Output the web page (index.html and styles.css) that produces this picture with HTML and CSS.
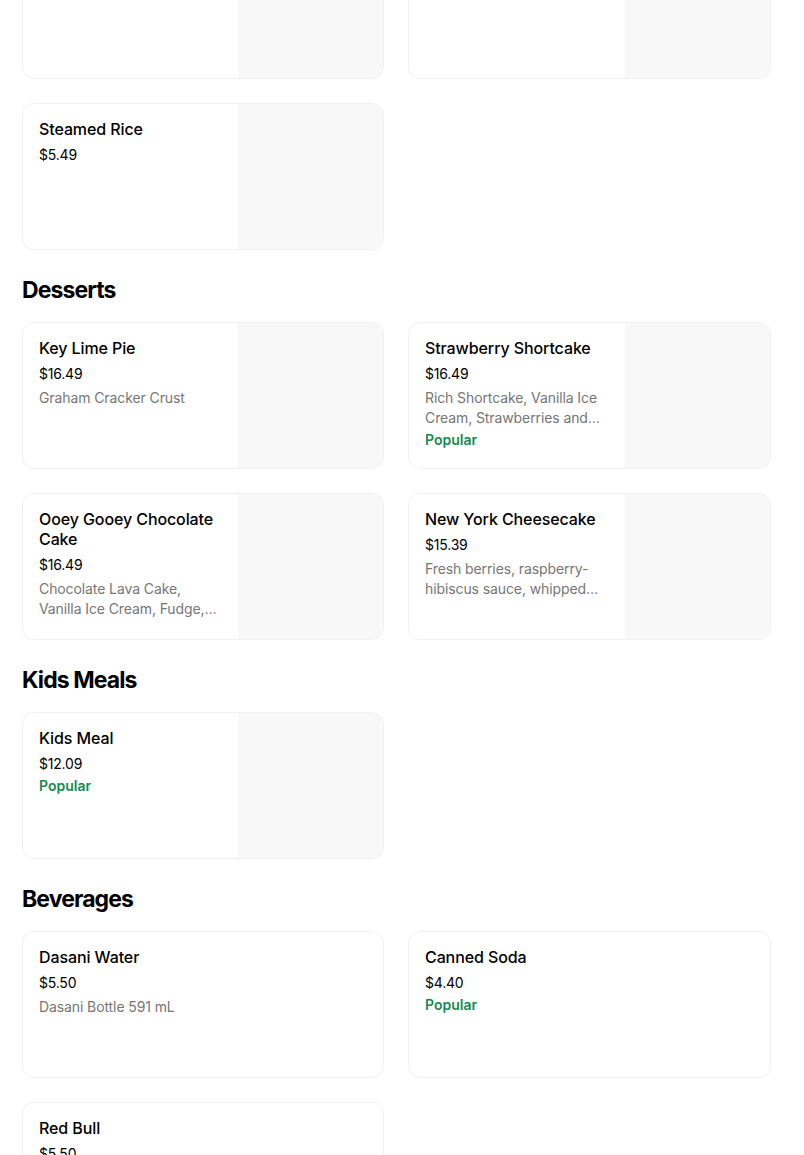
FILE: index.html
```html
<!DOCTYPE html>
<html lang="en">
<head>
<meta charset="utf-8">
<title>Menu</title>
<link rel="stylesheet" href="styles.css">
</head>
<body>
<main class="menu">
  <section class="section">
    <div class="grid">
      <div class="card"><div class="info"></div><div class="thumb"></div></div>
      <div class="card"><div class="info"></div><div class="thumb"></div></div>
      <div class="card">
        <div class="info">
          <div class="title">Steamed Rice</div>
          <div class="price">$5.49</div>
        </div>
        <div class="thumb"></div>
      </div>
    </div>
  </section>

  <section class="section">
    <h2 class="heading">Desserts</h2>
    <div class="grid">
      <div class="card">
        <div class="info">
          <div class="title">Key Lime Pie</div>
          <div class="price">$16.49</div>
          <div class="desc">Graham Cracker Crust</div>
        </div>
        <div class="thumb"></div>
      </div>
      <div class="card">
        <div class="info">
          <div class="title">Strawberry Shortcake</div>
          <div class="price">$16.49</div>
          <div class="desc">Rich Shortcake, Vanilla Ice Cream, Strawberries and Whipped Cream</div>
          <div class="popular">Popular</div>
        </div>
        <div class="thumb"></div>
      </div>
      <div class="card">
        <div class="info">
          <div class="title">Ooey Gooey Chocolate Cake</div>
          <div class="price">$16.49</div>
          <div class="desc">Chocolate Lava Cake, Vanilla Ice Cream, Fudge, Caramel</div>
        </div>
        <div class="thumb"></div>
      </div>
      <div class="card">
        <div class="info">
          <div class="title">New York Cheesecake</div>
          <div class="price">$15.39</div>
          <div class="desc">Fresh berries, raspberry-hibiscus sauce, whipped cream</div>
        </div>
        <div class="thumb"></div>
      </div>
    </div>
  </section>

  <section class="section">
    <h2 class="heading">Kids Meals</h2>
    <div class="grid">
      <div class="card">
        <div class="info">
          <div class="title">Kids Meal</div>
          <div class="price">$12.09</div>
          <div class="popular">Popular</div>
        </div>
        <div class="thumb"></div>
      </div>
    </div>
  </section>

  <section class="section">
    <h2 class="heading">Beverages</h2>
    <div class="grid">
      <div class="card">
        <div class="info">
          <div class="title">Dasani Water</div>
          <div class="price">$5.50</div>
          <div class="desc">Dasani Bottle 591 mL</div>
        </div>
      </div>
      <div class="card">
        <div class="info">
          <div class="title">Canned Soda</div>
          <div class="price">$4.40</div>
          <div class="popular">Popular</div>
        </div>
      </div>
      <div class="card">
        <div class="info">
          <div class="title">Red Bull</div>
          <div class="price">$5.50</div>
        </div>
      </div>
    </div>
  </section>
</main>
</body>
</html>
```

FILE: styles.css
```css
* { box-sizing: border-box; }

html, body {
  margin: 0;
  padding: 0;
  background: #ffffff;
}

body {
  font-family: Inter, "Noto Sans", Roboto, sans-serif;
  color: #000000;
}

.menu {
  width: 749px;
  margin: -68px 0 0 22px;
  display: flex;
  flex-direction: column;
}

.section {
  display: flex;
  flex-direction: column;
}

.heading {
  margin: 24px 0 16px;
  font-size: 23px;
  line-height: 32px;
  font-weight: 700;
  letter-spacing: -0.9px;
  color: #000000;
}

.grid {
  display: grid;
  grid-template-columns: 362px 363px;
  column-gap: 24px;
  row-gap: 24px;
}

.card {
  height: 147px;
  border: 1px solid #f0f0f0;
  border-radius: 12px;
  overflow: hidden;
  display: flex;
  background: #ffffff;
}

.info {
  flex: 1;
  min-width: 0;
  padding: 15px 16px 0 16px;
}

.thumb {
  width: 145px;
  flex: none;
  background: #f8f8f8;
}

.title {
  font-size: 16px;
  line-height: 20px;
  font-weight: 500;
  color: #000000;
  letter-spacing: -0.1px;
}

.price {
  margin-top: 6px;
  font-size: 14px;
  line-height: 20px;
  font-weight: 400;
  color: #000000;
  letter-spacing: -0.2px;
}

.desc {
  margin-top: 4px;
  font-size: 14px;
  line-height: 20px;
  color: #767676;
  letter-spacing: -0.1px;
  display: -webkit-box;
  -webkit-line-clamp: 2;
  -webkit-box-orient: vertical;
  overflow: hidden;
}

.popular {
  margin-top: 2px;
  font-size: 14px;
  line-height: 20px;
  font-weight: 600;
  color: #138a4e;
}
```
